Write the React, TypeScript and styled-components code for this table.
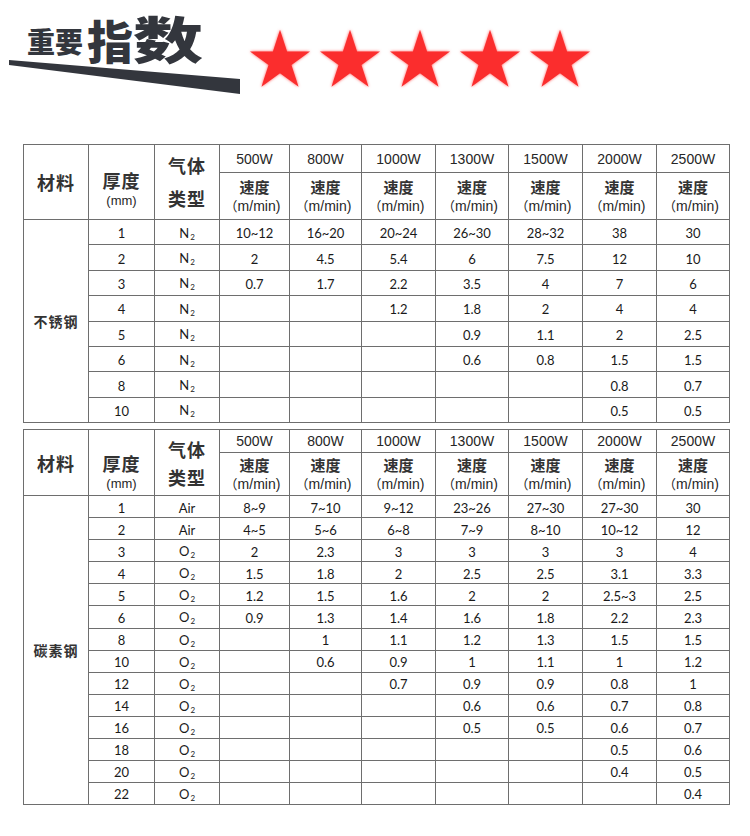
import { FC, Fragment } from 'react';
import styled, { createGlobalStyle } from 'styled-components';

type Gas = 'N2' | 'O2' | 'Air';

type Row = {
  thick: string;
  gas: Gas;
  values: string[];
};

type Sizes = {
  top: number;
  powerH: number;
  speedH: number;
  rowH: number;
  thickPad: number;
  gasLine: number;
};

const powers = ['500W', '800W', '1000W', '1300W', '1500W', '2000W', '2500W'];
const colWidths = [65, 66, 65, 70, 72, 74, 73, 74, 74, 73];

const stainless: Row[] = [
  { thick: '1', gas: 'N2', values: ['10~12', '16~20', '20~24', '26~30', '28~32', '38', '30'] },
  { thick: '2', gas: 'N2', values: ['2', '4.5', '5.4', '6', '7.5', '12', '10'] },
  { thick: '3', gas: 'N2', values: ['0.7', '1.7', '2.2', '3.5', '4', '7', '6'] },
  { thick: '4', gas: 'N2', values: ['', '', '1.2', '1.8', '2', '4', '4'] },
  { thick: '5', gas: 'N2', values: ['', '', '', '0.9', '1.1', '2', '2.5'] },
  { thick: '6', gas: 'N2', values: ['', '', '', '0.6', '0.8', '1.5', '1.5'] },
  { thick: '8', gas: 'N2', values: ['', '', '', '', '', '0.8', '0.7'] },
  { thick: '10', gas: 'N2', values: ['', '', '', '', '', '0.5', '0.5'] },
];

const carbon: Row[] = [
  { thick: '1', gas: 'Air', values: ['8~9', '7~10', '9~12', '23~26', '27~30', '27~30', '30'] },
  { thick: '2', gas: 'Air', values: ['4~5', '5~6', '6~8', '7~9', '8~10', '10~12', '12'] },
  { thick: '3', gas: 'O2', values: ['2', '2.3', '3', '3', '3', '3', '4'] },
  { thick: '4', gas: 'O2', values: ['1.5', '1.8', '2', '2.5', '2.5', '3.1', '3.3'] },
  { thick: '5', gas: 'O2', values: ['1.2', '1.5', '1.6', '2', '2', '2.5~3', '2.5'] },
  { thick: '6', gas: 'O2', values: ['0.9', '1.3', '1.4', '1.6', '1.8', '2.2', '2.3'] },
  { thick: '8', gas: 'O2', values: ['', '1', '1.1', '1.2', '1.3', '1.5', '1.5'] },
  { thick: '10', gas: 'O2', values: ['', '0.6', '0.9', '1', '1.1', '1', '1.2'] },
  { thick: '12', gas: 'O2', values: ['', '', '0.7', '0.9', '0.9', '0.8', '1'] },
  { thick: '14', gas: 'O2', values: ['', '', '', '0.6', '0.6', '0.7', '0.8'] },
  { thick: '16', gas: 'O2', values: ['', '', '', '0.5', '0.5', '0.6', '0.7'] },
  { thick: '18', gas: 'O2', values: ['', '', '', '', '', '0.5', '0.6'] },
  { thick: '20', gas: 'O2', values: ['', '', '', '', '', '0.4', '0.5'] },
  { thick: '22', gas: 'O2', values: ['', '', '', '', '', '', '0.4'] },
];

const GasLabel: FC<{ gas: Gas }> = ({ gas }) => {
  if (gas === 'Air') return <>Air</>;
  return (
    <>
      {gas[0]}
      <Sub>2</Sub>
    </>
  );
};

const Star: FC = () => (
  <StarIcon viewBox="0 0 100 96">
    <polygon points="50,0 61.8,36.3 100,36.3 69.1,58.8 80.9,95.1 50,72.6 19.1,95.1 30.9,58.8 0,36.3 38.2,36.3" />
  </StarIcon>
);

const CutTable: FC<{ material: string; rows: Row[]; sizes: Sizes }> = ({
  material,
  rows,
  sizes,
}) => {
  return (
    <Table $top={sizes.top}>
      <colgroup>
        {colWidths.map((w, i) => (
          <col key={i} style={{ width: w }} />
        ))}
      </colgroup>
      <thead>
        <HeadRow $h={sizes.powerH}>
          <TitleCell rowSpan={2}>材料</TitleCell>
          <TitleCell rowSpan={2} $padTop={sizes.thickPad}>
            <TitleLine $line={21}>厚度</TitleLine>
            <UnitLine $size={13}>(mm)</UnitLine>
          </TitleCell>
          <TitleCell rowSpan={2}>
            <TitleLine $line={sizes.gasLine}>气体</TitleLine>
            <TitleLine $line={sizes.gasLine}>类型</TitleLine>
          </TitleCell>
          {powers.map((p) => (
            <PowerCell key={p}>{p}</PowerCell>
          ))}
        </HeadRow>
        <HeadRow $h={sizes.speedH}>
          {powers.map((p) => (
            <SpeedCell key={p}>
              <SpeedLabel>速度</SpeedLabel>
              <UnitLine $size={14}>
                <WideParen>（</WideParen>m/min)
              </UnitLine>
            </SpeedCell>
          ))}
        </HeadRow>
      </thead>
      <tbody>
        {rows.map((r, i) => (
          <BodyRow key={r.thick} $h={sizes.rowH}>
            {i === 0 && <MaterialCell rowSpan={rows.length}>{material}</MaterialCell>}
            <DataCell>{r.thick}</DataCell>
            <DataCell>
              <GasLabel gas={r.gas} />
            </DataCell>
            {r.values.map((v, j) => (
              <Fragment key={j}>
                <DataCell>{v}</DataCell>
              </Fragment>
            ))}
          </BodyRow>
        ))}
      </tbody>
    </Table>
  );
};

const App: FC = () => {
  return (
    <Page>
      <GlobalStyle />
      <Header>
        <TitleBlock>
          <TitleText>
            <Char $size={28} $lift={7}>重</Char>
            <Char $size={28} $lift={7}>要</Char>
            <Char $size={46} $lift={0} $left={4}>指</Char>
            <Char $size={50} $lift={0} $stretch={1.4}>数</Char>
          </TitleText>
          <Wedge viewBox="0 0 231 35">
            <polygon points="0,1 0,6 231,35 231,20" />
          </Wedge>
        </TitleBlock>
        <Stars>
          {[0, 1, 2, 3, 4].map((i) => (
            <Star key={i} />
          ))}
        </Stars>
      </Header>
      <CutTable
        material="不锈钢"
        rows={stainless}
        sizes={{ top: 0, powerH: 28, speedH: 47, rowH: 25.4, thickPad: 15, gasLine: 33 }}
      />
      <CutTable
        material="碳素钢"
        rows={carbon}
        sizes={{ top: 6, powerH: 23, speedH: 43, rowH: 22.07, thickPad: 20, gasLine: 28 }}
      />
    </Page>
  );
};

export default App;

const GlobalStyle = createGlobalStyle`
  html, body {
    margin: 0;
    padding: 0;
    background: #ffffff;
  }
  body {
    font-family: 'Noto Sans CJK SC', sans-serif;
  }
`;

const Page = styled.div`
  width: 750px;
  height: 836px;
  overflow: hidden;
  background: #fff;
`;

const Header = styled.header`
  display: flex;
  align-items: flex-start;
  height: 144px;
`;

const TitleBlock = styled.div`
  display: flex;
  flex-direction: column;
  width: 231px;
  margin-left: 9px;
  padding-top: 14px;
`;

const TitleText = styled.div`
  display: flex;
  align-items: flex-end;
  height: 48px;
  padding-left: 18px;
  color: #33363d;
`;

const Char = styled.span<{ $size: number; $lift: number; $left?: number; $stretch?: number }>`
  display: inline-block;
  font-family: 'Noto Sans CJK SC', sans-serif;
  font-weight: 900;
  font-size: ${({ $size }) => $size}px;
  line-height: 1;
  margin-bottom: ${({ $lift }) => $lift}px;
  margin-left: ${({ $left = 0 }) => $left}px;
  transform: scaleX(${({ $stretch = 1 }) => $stretch});
  transform-origin: left bottom;
`;

const Wedge = styled.svg`
  display: block;
  width: 231px;
  height: 35px;
  margin-top: -3px;
  fill: #33363d;
`;

const Stars = styled.div`
  display: flex;
  gap: 10px;
  margin-left: 10px;
  padding-top: 29px;
`;

const StarIcon = styled.svg`
  width: 60px;
  height: 59px;
  fill: #fb2d2d;
  filter: drop-shadow(0 0 1.5px rgba(255, 60, 60, 0.85));
`;

const Table = styled.table<{ $top: number }>`
  border-collapse: collapse;
  table-layout: fixed;
  width: 707px;
  margin-left: 23px;
  margin-top: ${({ $top }) => $top}px;
  color: #1a1a1a;

  th,
  td {
    border: 1px solid #6e6e6e;
    padding: 0;
    text-align: center;
    vertical-align: middle;
  }
`;

const HeadRow = styled.tr<{ $h: number }>`
  height: ${({ $h }) => $h}px;
`;

const BodyRow = styled.tr<{ $h: number }>`
  height: ${({ $h }) => $h}px;
`;

const TitleCell = styled.th<{ $padTop?: number }>`
  font-family: 'Noto Sans CJK SC', sans-serif;
  font-weight: 700;
  font-size: 18px;
  color: #333;
  letter-spacing: 1px;
  padding-top: ${({ $padTop = 0 }) => $padTop}px !important;
`;

const TitleLine = styled.div<{ $line: number }>`
  line-height: ${({ $line }) => $line}px;
`;

const UnitLine = styled.div<{ $size: number }>`
  font-family: 'Liberation Sans', 'Noto Sans CJK SC', sans-serif;
  font-weight: 400;
  font-size: ${({ $size }) => $size}px;
  line-height: 19px;
  letter-spacing: 0;
  color: #262626;
`;

const WideParen = styled.span`
  font-family: 'Noto Sans CJK SC', sans-serif;
  font-size: 13px;
  margin-left: -4px;
`;

const PowerCell = styled.th`
  font-family: 'Liberation Sans', 'Noto Sans CJK SC', sans-serif;
  font-weight: 400;
  font-size: 14px;
  color: #262626;
`;

const SpeedCell = styled.th`
  font-weight: 400;
`;

const SpeedLabel = styled.div`
  font-family: 'Noto Sans CJK SC', sans-serif;
  font-weight: 700;
  font-size: 15px;
  line-height: 19px;
  color: #333;
`;

const MaterialCell = styled.td`
  font-family: 'Noto Sans CJK SC', sans-serif;
  font-weight: 700;
  font-size: 14px;
  letter-spacing: 1px;
  color: #333;
`;

const DataCell = styled.td`
  font-family: Lato, 'Noto Sans', sans-serif;
  font-size: 13px;
  line-height: 1;
  padding-top: 3px !important;
`;

const Sub = styled.span`
  font-size: 8px;
  vertical-align: -2px;
  margin-left: 1px;
`;
